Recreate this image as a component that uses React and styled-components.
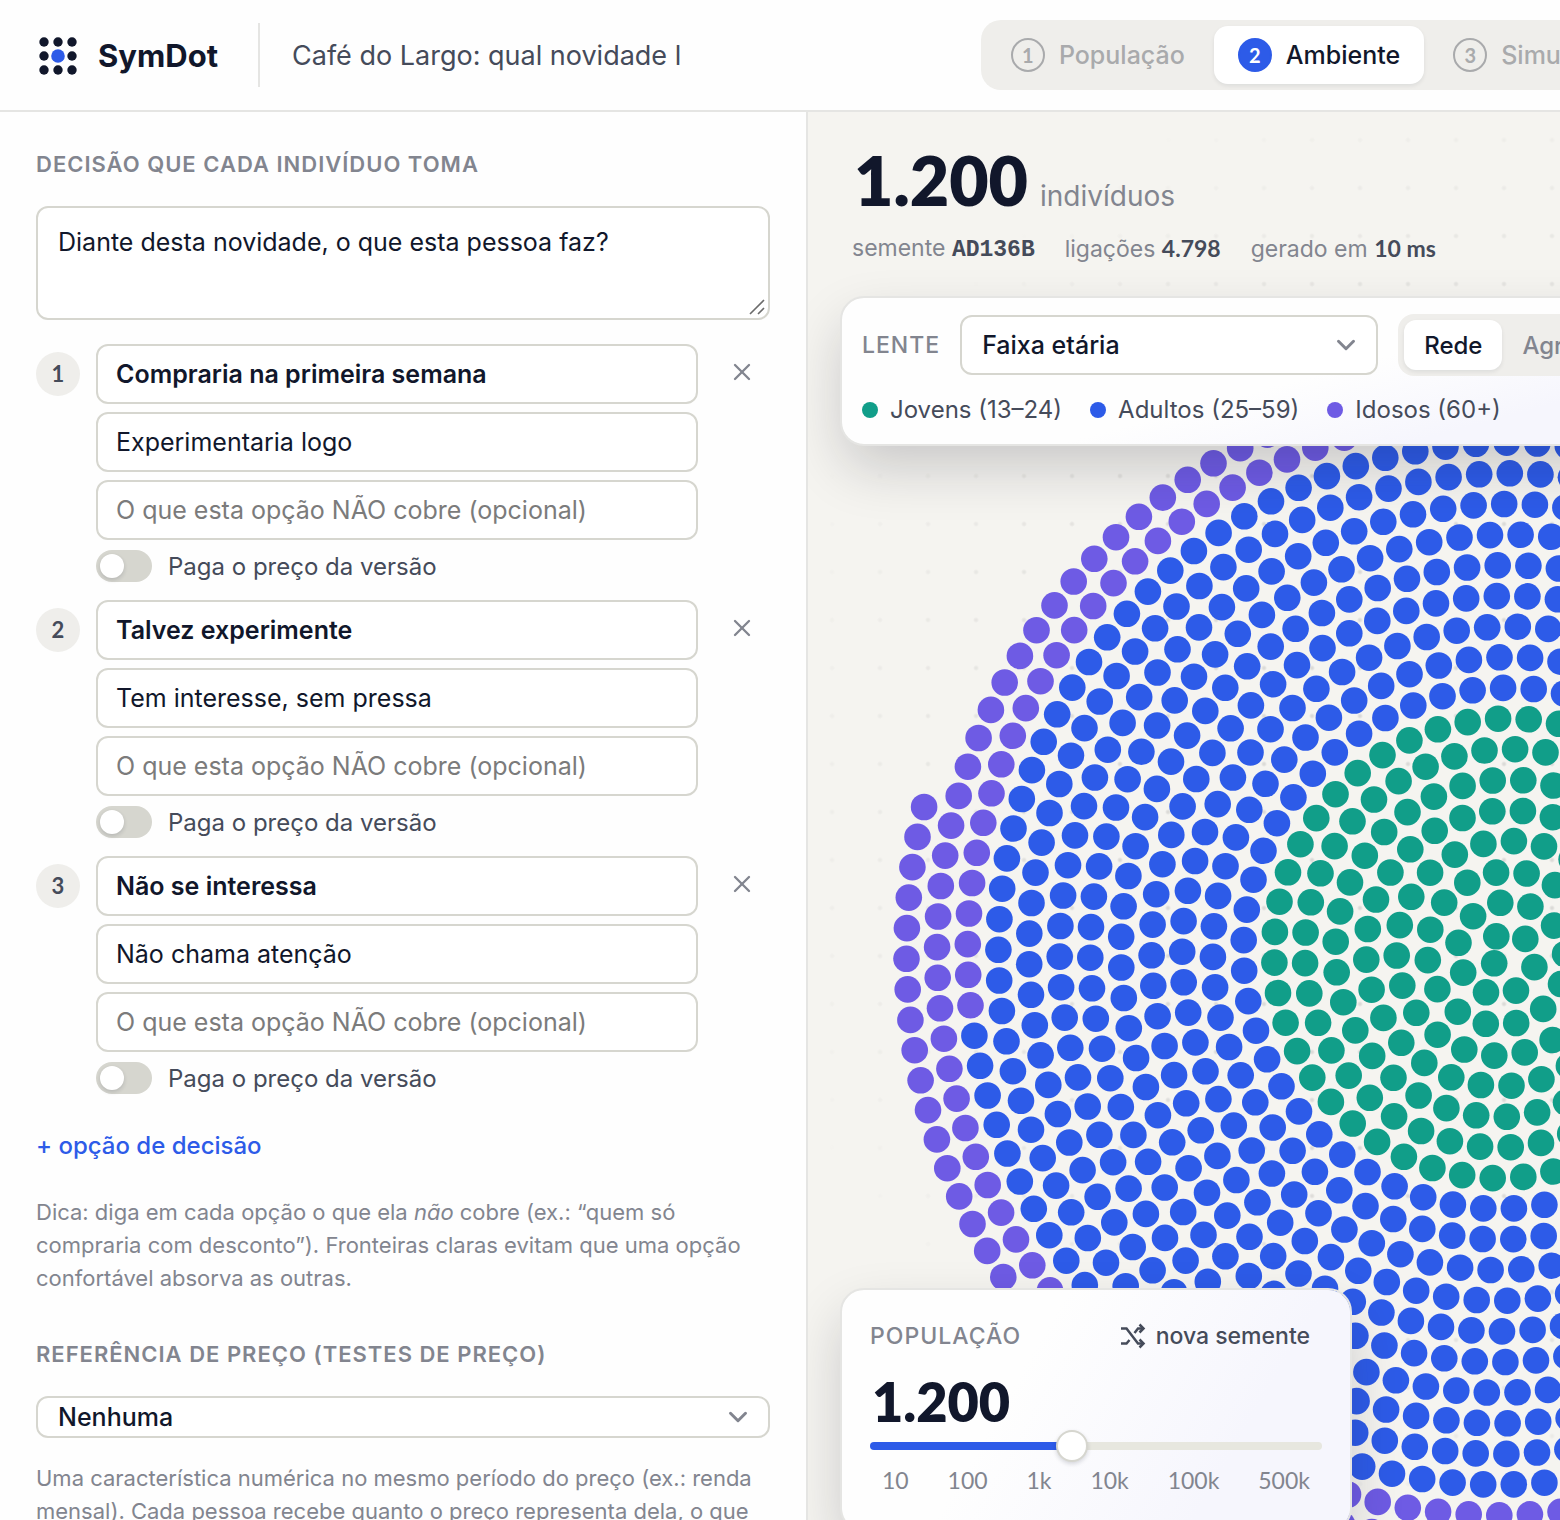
import React, { useState } from "react";
import styled, { createGlobalStyle } from "styled-components";
import { ChevronDown, X } from "lucide-react";

const TOTAL = 1200;
const YOUNG = 201;
const ADULT = 960;
const PITCH = 4.877;

const colors = {
  young: "#119e89",
  adult: "#2d5be8",
  senior: "#6e5be4",
};

// one dot per person, walking outwards along a spiral
const people = Array.from({ length: TOTAL }, (_, n) => {
  const angle = Math.sqrt(4 * Math.PI * (n + 0.5));
  const radius = PITCH * angle;
  return {
    x: (696 + radius * Math.cos(angle)).toFixed(1),
    y: (844 + radius * Math.sin(angle)).toFixed(1),
    color:
      n < YOUNG ? colors.young : n < ADULT ? colors.adult : colors.senior,
  };
});

const steps = ["População", "Ambiente", "Simulação"];

const initialOptions = [
  { name: "Compraria na primeira semana", detail: "Experimentaria logo" },
  { name: "Talvez experimente", detail: "Tem interesse, sem pressa" },
  { name: "Não se interessa", detail: "Não chama atenção" },
];

const legend = [
  { label: "Jovens (13–24)", color: colors.young },
  { label: "Adultos (25–59)", color: colors.adult },
  { label: "Idosos (60+)", color: colors.senior },
];

const ticks = ["10", "100", "1k", "10k", "100k", "500k"];

function Logo() {
  const spots = [5, 19, 33];
  return (
    <svg width="38" height="40" viewBox="0 -2 38 40" aria-hidden="true">
      {spots.map((y) =>
        spots.map((x) => (
          <circle
            key={`${x}-${y}`}
            cx={x}
            cy={y}
            r={x === 19 && y === 19 ? 6.8 : 4.7}
            fill={x === 19 && y === 19 ? colors.adult : "#11172b"}
          />
        ))
      )}
    </svg>
  );
}

function ShuffleIcon() {
  return (
    <svg
      width="26"
      height="26"
      viewBox="0 0 26 26"
      fill="none"
      stroke="currentColor"
      strokeWidth="2.5"
      aria-hidden="true"
    >
      <path d="M1 5.500H6.500L18 20.500H23" />
      <path d="M1 20.500H6.500L9.500 17" />
      <path d="M14.500 10L18 5.500H23" />
      <path d="M19.500 1.500L23.500 5.500L19.500 9.500" />
      <path d="M19.500 16.500L23.500 20.500L19.500 24.500" />
    </svg>
  );
}

function Option({ index, option, onRemove }) {
  return (
    <OptionRow>
      <Badge>{index + 1}</Badge>
      <OptionFields>
        <TextInput $strong aria-label="Opção" defaultValue={option.name} />
        <TextInput aria-label="Descrição" defaultValue={option.detail} />
        <TextInput
          aria-label="O que não cobre"
          placeholder="O que esta opção NÃO cobre (opcional)"
        />
        <SwitchLabel>
          <Switch type="checkbox" />
          Paga o preço da versão
        </SwitchLabel>
      </OptionFields>
      <RemoveButton type="button" aria-label="Remover" onClick={onRemove}>
        <X size={28} strokeWidth={2} />
      </RemoveButton>
    </OptionRow>
  );
}

function Crowd() {
  return (
    <CrowdCanvas aria-hidden="true">
      {people.map((p, i) => (
        <circle key={i} cx={p.x} cy={p.y} r="13.3" fill={p.color} />
      ))}
    </CrowdCanvas>
  );
}

function App() {
  const [options, setOptions] = useState(initialOptions);
  const [size, setSize] = useState(0.4425);

  return (
    <Page>
      <GlobalStyle />
      <Header>
        <HeaderMain>
          <Brand href="#">
            <Logo />
            SymDot
          </Brand>
          <TitleInput
            aria-label="Título"
            defaultValue="Café do Largo: qual novidade l"
          />
        </HeaderMain>
        <Steps>
          {steps.map((step, i) => (
            <Step key={step} type="button" $active={i === 1}>
              <StepNumber $active={i === 1}>{i + 1}</StepNumber>
              {step}
            </Step>
          ))}
        </Steps>
      </Header>

      <Body>
        <Sidebar>
          <SectionLabel htmlFor="decision">
            Decisão que cada indivíduo toma
          </SectionLabel>
          <AreaWrap>
            <Area
              id="decision"
              defaultValue="Diante desta novidade, o que esta pessoa faz?"
            />
            <Grip viewBox="0 0 16 16" aria-hidden="true">
              <path d="M1 15L15 1M9 15L15 9" />
            </Grip>
          </AreaWrap>
          <OptionList>
            {options.map((option, i) => (
              <Option
                key={option.name}
                index={i}
                option={option}
                onRemove={() => setOptions(options.filter((o) => o !== option))}
              />
            ))}
          </OptionList>
          <AddButton type="button">+ opção de decisão</AddButton>
          <Hint>
            Dica: diga em cada opção o que ela <em>não</em> cobre (ex.: “quem só
            compraria com desconto”). Fronteiras claras evitam que uma opção
            confortável absorva as outras.
          </Hint>
          <SectionLabel htmlFor="price" $spaced>
            Referência de preço (testes de preço)
          </SectionLabel>
          <SelectWrap>
            <Select id="price" $compact>
              <option>Nenhuma</option>
            </Select>
            <ChevronDown size={30} strokeWidth={2.4} />
          </SelectWrap>
          <Hint $tight>
            Uma característica numérica no mesmo período do preço (ex.: renda
            mensal). Cada pessoa recebe quanto o preço representa dela, o que
          </Hint>
        </Sidebar>

        <Stage>
          <Grid />
          <Crowd />
          <StageContent>
            <Headline>
              <BigNumber>1.200</BigNumber>
              indivíduos
            </Headline>
            <Meta>
              <span>
                semente <Mono>AD136B</Mono>
              </span>
              <span>
                ligações <b>4.798</b>
              </span>
              <span>
                gerado em <b>10 ms</b>
              </span>
            </Meta>
            <LensCard>
              <LensRow>
                <CardLabel htmlFor="lens">Lente</CardLabel>
                <SelectWrap $fixed>
                  <Select id="lens">
                    <option>Faixa etária</option>
                  </Select>
                  <ChevronDown size={30} strokeWidth={2.4} />
                </SelectWrap>
                <Segments>
                  <Segment type="button" $active>
                    Rede
                  </Segment>
                  <Segment type="button">Agrupado</Segment>
                </Segments>
              </LensRow>
              <Legend>
                {legend.map((item) => (
                  <LegendItem key={item.label} $color={item.color}>
                    {item.label}
                  </LegendItem>
                ))}
              </Legend>
            </LensCard>
          </StageContent>
          <PopulationCard>
            <CardTop>
              <CardLabel htmlFor="population">População</CardLabel>
              <SeedButton type="button">
                <ShuffleIcon />
                nova semente
              </SeedButton>
            </CardTop>
            <BigNumber $small>1.200</BigNumber>
            <Range
              id="population"
              type="range"
              min="0"
              max="1"
              step="0.0001"
              value={size}
              onChange={(e) => setSize(Number(e.target.value))}
              style={{ "--fill": `${size * 100}%` }}
            />
            <Ticks>
              {ticks.map((tick) => (
                <span key={tick}>{tick}</span>
              ))}
            </Ticks>
          </PopulationCard>
        </Stage>
      </Body>
    </Page>
  );
}

const GlobalStyle = createGlobalStyle`
  * {
    box-sizing: border-box;
  }
  body {
    margin: 0;
    color: #11172b;
    background: #fefefe;
    font-family: Inter, "Liberation Sans", sans-serif;
    font-size: 25px;
  }
  button, input, textarea, select {
    font: inherit;
    color: inherit;
  }
  button {
    border: none;
    background: none;
    padding: 0;
    cursor: pointer;
  }
`;

const Page = styled.div`
  display: flex;
  flex-direction: column;
  height: 100vh;
  overflow: hidden;
`;

const Header = styled.header`
  display: flex;
  align-items: center;
  flex: none;
  height: 112px;
  padding-left: 36px;
  border-bottom: 2px solid #e5e5e3;
`;

const HeaderMain = styled.div`
  display: flex;
  align-items: center;
  flex: 0 0 62%;
`;

const Brand = styled.a`
  display: flex;
  align-items: center;
  gap: 21px;
  height: 64px;
  padding: 0 40px 0 3px;
  border-right: 2px solid #e5e5e3;
  color: #11172b;
  font-size: 31px;
  font-weight: 700;
  text-decoration: none;
`;

const TitleInput = styled.input`
  flex: 1;
  min-width: 0;
  padding: 0 32px;
  border: none;
  outline: none;
  background: none;
  color: #454b5a;
  font-size: 27px;
`;

const Steps = styled.nav`
  display: flex;
  gap: 5px;
  flex: none;
  height: 70px;
  padding: 6px;
  border-radius: 20px;
  background: #efeeeb;
`;

const Step = styled.button`
  display: flex;
  align-items: center;
  gap: 14px;
  padding: 0 24px;
  border-radius: 14px;
  font-size: 25px;
  font-weight: 500;
  color: ${(p) => (p.$active ? "#11172b" : "#a9aaac")};
  background: ${(p) => (p.$active ? "#fff" : "none")};
  box-shadow: ${(p) => (p.$active ? "0 2px 4px rgba(17, 23, 43, 0.08)" : "none")};
`;

const StepNumber = styled.span`
  display: grid;
  place-items: center;
  width: 34px;
  height: 34px;
  border: 2px solid ${(p) => (p.$active ? "#2d5be8" : "#a9aaac")};
  border-radius: 50%;
  background: ${(p) => (p.$active ? "#2d5be8" : "none")};
  color: ${(p) => (p.$active ? "#fff" : "#a9aaac")};
  font-family: Lato, sans-serif;
  font-size: 20px;
  font-weight: 700;
  line-height: 28px;
`;

const Body = styled.div`
  display: flex;
  flex: 1;
  min-height: 0;
`;

const Sidebar = styled.aside`
  flex: 0 0 min(808px, 52%);
  padding: 36px;
  overflow-y: auto;
  scrollbar-width: none;
  border-right: 2px solid #e5e5e3;
`;

const SectionLabel = styled.label`
  display: block;
  margin: ${(p) => (p.$spaced ? "43px" : "0")} 0 26px;
  color: #82858f;
  font-size: 22px;
  font-weight: 600;
  line-height: 32px;
  letter-spacing: 1px;
  text-transform: uppercase;
`;

const AreaWrap = styled.div`
  position: relative;
  display: flex;
`;

const Area = styled.textarea`
  width: 100%;
  height: 114px;
  padding: 16px 20px;
  border: 2px solid #d6d6cf;
  border-radius: 12px;
  outline: none;
  resize: none;
  background: #fff;
  line-height: 36px;
`;

const Grip = styled.svg`
  position: absolute;
  right: 5px;
  bottom: 5px;
  width: 16px;
  height: 16px;
  fill: none;
  stroke: #6b6b6b;
  stroke-width: 1.6;
`;

const OptionList = styled.div`
  display: flex;
  flex-direction: column;
  gap: 16px;
  margin-top: 24px;
`;

const OptionRow = styled.div`
  display: flex;
  align-items: flex-start;
  gap: 16px;
`;

const Badge = styled.span`
  display: grid;
  place-items: center;
  flex: none;
  width: 44px;
  height: 44px;
  margin-top: 8px;
  border-radius: 50%;
  background: #efeeeb;
  color: #454b5a;
  font-family: Lato, sans-serif;
  font-size: 22px;
  font-weight: 700;
  line-height: 32px;
`;

const OptionFields = styled.div`
  display: flex;
  flex-direction: column;
  gap: 8px;
  flex: 1;
  min-width: 0;
`;

const TextInput = styled.input`
  width: 100%;
  height: 60px;
  padding: 0 18px;
  border: 2px solid #d6d6cf;
  border-radius: 12px;
  outline: none;
  background: #fff;
  font-weight: ${(p) => (p.$strong ? 600 : 400)};

  &::placeholder {
    color: #7b7b7b;
  }
`;

const SwitchLabel = styled.label`
  display: flex;
  align-items: center;
  gap: 16px;
  height: 36px;
  color: #454b5a;
  font-size: 24px;
`;

const Switch = styled.input`
  appearance: none;
  width: 56px;
  height: 32px;
  margin: 0;
  padding: 4px;
  border-radius: 16px;
  background: #d6d6cf;

  &::before {
    content: "";
    display: block;
    width: 24px;
    height: 24px;
    border-radius: 50%;
    background: #fff;
    box-shadow: 0 2px 4px rgba(17, 23, 43, 0.16);
  }
  &:checked {
    background: #2d5be8;
  }
  &:checked::before {
    margin-left: 24px;
  }
`;

const RemoveButton = styled.button`
  display: grid;
  place-items: center;
  width: 56px;
  height: 56px;
  color: #82858f;
`;

const AddButton = styled.button`
  display: block;
  margin-top: 32px;
  color: #2d5be8;
  font-size: 24px;
  font-weight: 500;
  line-height: 36px;
`;

const Hint = styled.p`
  margin: ${(p) => (p.$tight ? "24px" : "32px")} 0 0;
  color: #82858f;
  font-size: 22px;
  line-height: 33px;
`;

const SelectWrap = styled.div`
  position: relative;
  flex: ${(p) => (p.$fixed ? "0 0 418px" : "none")};

  svg {
    position: absolute;
    top: calc(50% - 15px);
    right: 17px;
    color: #82858f;
    pointer-events: none;
  }
`;

const Select = styled.select`
  display: block;
  appearance: none;
  width: 100%;
  height: ${(p) => (p.$compact ? "42px" : "60px")};
  padding: 0 20px;
  border: 2px solid #d6d6cf;
  border-radius: 12px;
  outline: none;
  background: #fff;
  font-weight: 500;
`;

const Stage = styled.main`
  position: relative;
  flex: 1;
  min-width: 0;
  overflow: hidden;
  background: #f5f4f0;
`;

const Grid = styled.div`
  position: absolute;
  inset: 0;
  background-image: radial-gradient(circle, #dcdbd8 1px, transparent 3px);
  background-size: 48px 48px;
  background-position: 0 4px;
  mask-image: radial-gradient(circle at 696px 700px, #000 400px, transparent 760px);
`;

const CrowdCanvas = styled.svg`
  position: absolute;
  inset: 0;
  width: 100%;
  height: 100%;
`;

const StageContent = styled.div`
  position: relative;
  padding: 32px 0 0 32px;
`;

const Headline = styled.div`
  display: flex;
  align-items: baseline;
  gap: 12px;
  padding-left: 14px;
  color: #82858f;
  font-size: 28px;
`;

const BigNumber = styled.strong`
  margin-top: ${(p) => (p.$small ? "16px" : "0")};
  padding-left: ${(p) => (p.$small ? "2px" : "0")};
  color: #11172b;
  font-family: Lato, sans-serif;
  font-size: ${(p) => (p.$small ? "54px" : "68px")};
  font-weight: 800;
  line-height: ${(p) => (p.$small ? "56px" : "72px")};
`;

const Meta = styled.div`
  display: flex;
  gap: 30px;
  margin-top: 16px;
  padding-left: 12px;
  color: #82858f;
  font-size: 23px;
  line-height: 32px;
  white-space: nowrap;

  b {
    color: #454b5a;
    font-family: Lato, sans-serif;
    font-weight: 700;
  }
`;

const Mono = styled.b`
  && {
    font-family: "Liberation Mono", monospace;
  }
`;

const Card = styled.section`
  border: 2px solid #e5e5e3;
  border-radius: 24px;
  background: #fefefe linear-gradient(120deg, #fefefe 35%, #f6f6fd 75%);
  background-clip: padding-box;
  box-shadow: 0 24px 56px -4px rgba(20, 22, 34, 0.2);
`;

const LensCard = styled(Card)`
  width: max-content;
  min-width: 100%;
  margin-top: 30px;
  padding: 16px 20px;
  background-image: linear-gradient(165deg, #fefefe 55%, #f6f6fd 80%);
`;

const LensRow = styled.div`
  display: flex;
  align-items: center;
  gap: 20px;
`;

const CardLabel = styled.label`
  color: #82858f;
  font-size: 23px;
  font-weight: 500;
  line-height: 32px;
  letter-spacing: 1px;
  text-transform: uppercase;
`;

const Segments = styled.div`
  display: flex;
  height: 62px;
  padding: 6px;
  border-radius: 16px;
  background: #efeeeb;
`;

const Segment = styled.button`
  padding: 0 20px;
  border-radius: 12px;
  font-size: 24px;
  font-weight: 500;
  color: ${(p) => (p.$active ? "#11172b" : "#82858f")};
  background: ${(p) => (p.$active ? "#fff" : "none")};
  box-shadow: ${(p) => (p.$active ? "0 2px 4px rgba(17, 23, 43, 0.08)" : "none")};
`;

const Legend = styled.div`
  display: flex;
  gap: 28px;
  margin-top: 16px;
  color: #454b5a;
  font-size: 24px;
  line-height: 36px;
`;

const LegendItem = styled.span`
  display: flex;
  align-items: center;
  gap: 12px;

  &::before {
    content: "";
    width: 16px;
    height: 16px;
    border-radius: 50%;
    background: ${(p) => p.$color};
  }
`;

const PopulationCard = styled(Card)`
  position: absolute;
  left: 32px;
  bottom: -12px;
  display: flex;
  flex-direction: column;
  width: 512px;
  padding: 24px 28px 34px;
`;

const CardTop = styled.div`
  display: flex;
  align-items: center;
  justify-content: space-between;
  height: 44px;
  padding-right: 12px;
`;

const SeedButton = styled.button`
  display: flex;
  align-items: center;
  gap: 10px;
  color: #454b5a;
  font-size: 23px;
  font-weight: 500;
`;

const Range = styled.input`
  appearance: none;
  width: 100%;
  height: 32px;
  margin: 0;
  background: none;

  &::-webkit-slider-runnable-track {
    height: 8px;
    border-radius: 4px;
    background: linear-gradient(#2d5be8, #2d5be8) 0 0 / var(--fill) 100% no-repeat
      #e7e7df;
  }
  &::-webkit-slider-thumb {
    appearance: none;
    width: 32px;
    height: 32px;
    margin-top: -12px;
    border: 2px solid #d6d6cf;
    border-radius: 50%;
    background: #fff;
    box-shadow: 0 2px 4px rgba(17, 23, 43, 0.16);
  }
`;

const Ticks = styled.div`
  display: flex;
  justify-content: space-between;
  padding: 2px 12px 0;
  color: #82858f;
  font-family: Lato, sans-serif;
  font-size: 23px;
  line-height: 32px;
`;

export default App;
